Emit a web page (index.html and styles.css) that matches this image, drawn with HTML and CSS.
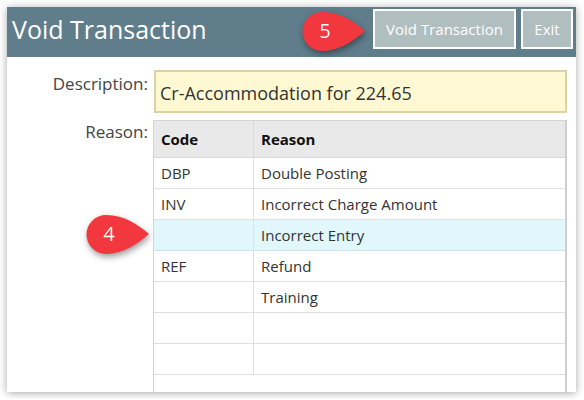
FILE: index.html
```html
<!DOCTYPE html>
<html lang="en">

<head>
    <meta charset="UTF-8">
    <meta name="viewport" content="width=device-width, initial-scale=1.0">
    <title>Void Transaction</title>
    <link rel="stylesheet" href="styles.css">
</head>

<body>
    <div class="window">
        <div class="header">
            <h1 class="title">Void Transaction</h1>
            <div class="actions">
                <button class="btn btn-void">Void Transaction</button>
                <button class="btn btn-exit">Exit</button>
            </div>
        </div>

        <div class="content">
            <label class="field-label">Description:</label>
            <div class="description">Cr-Accommodation for 224.65</div>

            <label class="field-label reason-label">Reason:</label>
            <div class="grid-box">
                <table class="reasons">
                    <thead>
                        <tr>
                            <th class="col-code">Code</th>
                            <th>Reason</th>
                        </tr>
                    </thead>
                    <tbody>
                        <tr><td>DBP</td><td>Double Posting</td></tr>
                        <tr><td>INV</td><td>Incorrect Charge Amount</td></tr>
                        <tr class="selected"><td></td><td>Incorrect Entry</td></tr>
                        <tr><td>REF</td><td>Refund</td></tr>
                        <tr><td></td><td>Training</td></tr>
                        <tr><td></td><td></td></tr>
                        <tr><td></td><td></td></tr>
                    </tbody>
                </table>
            </div>
        </div>
    </div>

    <!-- step callouts -->
    <div class="callout callout-5">
        <svg width="68" height="42" viewBox="0 0 68 42">
            <path d="M64 20 C52 10 40 1.5 21 1 A19.5 19.5 0 0 0 21 40 C40 39.5 52 30 64 20 Z" fill="#f2373f" />
        </svg>
        <span class="callout-num">5</span>
    </div>
    <div class="callout callout-4">
        <svg width="68" height="42" viewBox="0 0 68 42">
            <path d="M64 20 C52 10 40 1.5 21 1 A19.5 19.5 0 0 0 21 40 C40 39.5 52 30 64 20 Z" fill="#f2373f" />
        </svg>
        <span class="callout-num">4</span>
    </div>
</body>

</html>
```

FILE: styles.css
```css
body {
    margin: 0;
    background-color: white;
    font-family: "Open Sans", "DejaVu Sans", sans-serif;
}

.window {
    width: 569px;
    height: 385px;
    margin: 7px;
    background-color: white;
    box-shadow: 0px 1px 8px rgba(0, 0, 0, 0.35);
    overflow: hidden;
}

.header {
    height: 50px;
    display: flex;
    justify-content: space-between;
    align-items: flex-start;
    background-color: #607d8b;
}

.title {
    margin: 0;
    padding: 5px 0 0 5px;
    font-size: 25px;
    font-weight: normal;
    line-height: 34px;
    color: white;
}

.actions {
    display: flex;
    gap: 5px;
    padding: 2px 3px 0 0;
}

.btn {
    height: 40px;
    padding: 0;
    background-color: #b0bec0;
    border: 2px solid white;
    color: white;
    font-family: "Open Sans", "DejaVu Sans", sans-serif;
    font-size: 15px;
    cursor: pointer;
}

.btn-void {
    width: 143px;
}

.btn-exit {
    width: 52px;
}

.content {
    display: grid;
    grid-template-columns: 141px 413px;
    column-gap: 6px;
    row-gap: 7px;
    padding-top: 13px;
}

.field-label {
    text-align: right;
    font-size: 17px;
    color: #444;
    padding-top: 2px;
}

.reason-label {
    padding-top: 0;
}

.description {
    height: 39px;
    padding-left: 4px;
    background-color: #fef9d2;
    border: 2px solid #d8d4a6;
    font-size: 18px;
    line-height: 43px;
    color: #333;
}

.grid-box {
    margin-left: -1px;
    height: 272px;
    border: 1px solid #d4d4d4;
    border-right: 2px solid #cfcfcf;
    border-bottom: none;
    overflow: hidden;
}

.reasons {
    width: 100%;
    border-collapse: collapse;
    font-size: 15px;
    color: #333;
}

.reasons th {
    height: 36px;
    padding: 0 7px;
    text-align: left;
    font-weight: bold;
    color: #111;
    background-color: #e9e9e9;
    border-left: 1px solid #dadada;
    border-bottom: 1px solid #d8d8d8;
}

.reasons td {
    height: 30px;
    padding: 0 7px;
    border-left: 1px solid #e0e0e0;
    border-bottom: 1px solid #e0e0e0;
}

.reasons th:first-child,
.reasons td:first-child {
    border-left: none;
}

.col-code {
    width: 85px;
}

.reasons tr.selected td {
    background-color: #e1f7fc;
    border-bottom-color: #cde3e8;
}

.callout {
    position: absolute;
    width: 68px;
    height: 42px;
    filter: drop-shadow(1px 3px 3px rgba(0, 0, 0, 0.4));
}

.callout svg {
    display: block;
}

.callout-num {
    position: absolute;
    left: 12px;
    top: 0;
    width: 24px;
    line-height: 40px;
    text-align: center;
    font-size: 20px;
    color: white;
}

.callout-5 {
    left: 301px;
    top: 11px;
}

.callout-4 {
    left: 85px;
    top: 214px;
}
```
